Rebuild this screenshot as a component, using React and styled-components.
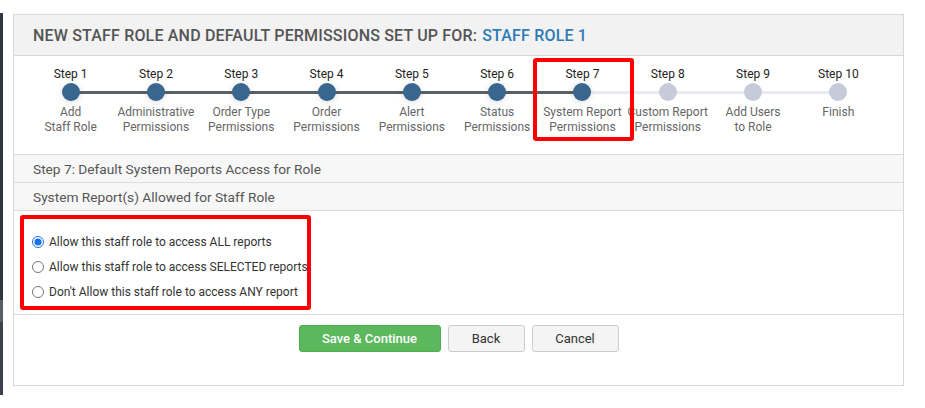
import React, { useState } from 'react';
import styled, { createGlobalStyle } from 'styled-components';

const GlobalStyle = createGlobalStyle`
  html, body {
    margin: 0;
    padding: 0;
    background: #ffffff;
    font-family: Roboto, "Liberation Sans", Arial, sans-serif;
  }
`;

const Page = styled.div`
  display: flex;
  align-items: flex-start;
  padding-top: 13px;
  width: 925px;
  height: 408px;
  box-sizing: border-box;
`;

const SideEdge = styled.div`
  width: 3px;
  height: 382px;
  background: linear-gradient(#2e3742, #2e3742 287px, #5a5f66 287px, #5a5f66 309px, #3a434d 309px);
  margin-right: 10px;
`;

const Panel = styled.div`
  margin-top: 1px;
  width: 891px;
  height: 372px;
  box-sizing: border-box;
  border: 1px solid #d6d9d9;
  display: flex;
  flex-direction: column;
`;

const Header = styled.div`
  height: 40px;
  background: #f2f2f2;
  border-bottom: 1px solid #d6d9d9;
  display: flex;
  align-items: center;
  padding-left: 19px;
  font-size: 16px;
  font-weight: 500;
  letter-spacing: 0.18px;
  color: #555;
  text-transform: uppercase;
`;

const Accent = styled.span`
  color: #2f7bb6;
  margin-left: 5px;
`;

const Stepper = styled.div`
  display: flex;
  padding: 11px 21px 0 14px;
  height: 99px;
  box-sizing: border-box;
  border-bottom: 1px solid #dcdcdc;
`;

const Step = styled.div`
  position: relative;
  width: 85.3px;
  flex: 0 0 85.3px;
  display: flex;
  flex-direction: column;
  align-items: center;
  font-size: 12px;

  &::before, &::after {
    content: '';
    position: absolute;
    top: 23.5px;
    height: 3px;
    width: 50%;
  }
  &::before {
    left: 0;
    background: ${p => (p.$first ? 'transparent' : p.$done ? '#5b6068' : '#eaeaf0')};
  }
  &::after {
    right: 0;
    background: ${p => (p.$last ? 'transparent' : p.$doneRight ? '#5b6068' : '#eaeaf0')};
  }
`;

const StepNum = styled.div`
  line-height: 15px;
  color: #222;
  white-space: nowrap;
`;

const Dot = styled.div`
  position: relative;
  z-index: 1;
  margin-top: 1px;
  width: 18px;
  height: 18px;
  border-radius: 50%;
  background: ${p => (p.$done ? '#38668f' : '#c6cbd9')};
  box-shadow: ${p => (p.$done ? '0 1px 6px rgba(0,0,0,0.15)' : 'none')};
`;

const StepLabel = styled.div`
  margin-top: 4px;
  line-height: 15px;
  color: #666;
  text-align: center;
  white-space: nowrap;
`;

const Highlight = styled.div`
  position: absolute;
  left: -7px;
  top: -9px;
  width: 101px;
  height: 83px;
  box-sizing: border-box;
  border: 4px solid #ff0000;
  border-radius: 3px;
  z-index: 2;
  pointer-events: none;
`;

const SubRow = styled.div`
  height: 27px;
  background: #f7f7f7;
  border-bottom: 1px solid #dcdcdc;
  display: flex;
  align-items: center;
  padding-left: 19px;
  font-size: 13.7px;
  color: #555;
`;

const Options = styled.div`
  border-bottom: 1px solid #dcdcdc;
  padding: 4px 0 4px 6px;
`;

const RedBox = styled.div`
  width: 291px;
  box-sizing: border-box;
  border: 4px solid #ff0000;
  border-radius: 3px;
  padding: 10px 0 2px 8px;
`;

const Option = styled.label`
  display: flex;
  align-items: center;
  height: 25px;
  font-size: 12px;
  color: #333;
  white-space: nowrap;
  cursor: pointer;
`;

const Radio = styled.input`
  width: 12px;
  height: 12px;
  margin: 0 5px 0 0;
  accent-color: #1a73e8;
`;

const Actions = styled.div`
  display: flex;
  justify-content: center;
  gap: 7px;
  padding-top: 10px;
`;

const Button = styled.button`
  height: 27px;
  box-sizing: border-box;
  padding: 0;
  width: ${p => p.$w}px;
  border-radius: 3px;
  font-family: Roboto, "Liberation Sans", Arial, sans-serif;
  font-size: 13px;
  cursor: pointer;
  border: 1px solid ${p => (p.$primary ? '#4cae4c' : '#cccccc')};
  background: ${p => (p.$primary ? '#5cb85c' : '#f4f4f4')};
  color: ${p => (p.$primary ? '#ffffff' : '#333333')};
  font-weight: ${p => (p.$primary ? 500 : 400)};
`;

const steps = [
  ['Add', 'Staff Role'],
  ['Administrative', 'Permissions'],
  ['Order Type', 'Permissions'],
  ['Order', 'Permissions'],
  ['Alert', 'Permissions'],
  ['Status', 'Permissions'],
  ['System Report', 'Permissions'],
  ['Custom Report', 'Permissions'],
  ['Add Users', 'to Role'],
  ['Finish'],
];

const current = 7;

const choices = [
  'Allow this staff role to access ALL reports',
  'Allow this staff role to access SELECTED reports',
  "Don't Allow this staff role to access ANY report",
];

export default function App() {
  const [choice, setChoice] = useState(0);

  return (
    <>
      <GlobalStyle />
      <Page>
        <SideEdge />
        <Panel>
          <Header>
            New Staff Role and Default Permissions Set Up For:
            <Accent>Staff Role 1</Accent>
          </Header>

          <Stepper>
            {steps.map((label, i) => {
              const n = i + 1;
              return (
                <Step
                  key={n}
                  $first={n === 1}
                  $last={n === steps.length}
                  $done={n <= current}
                  $doneRight={n < current}
                >
                  {n === current && <Highlight />}
                  <StepNum>Step {n}</StepNum>
                  <Dot $done={n <= current} />
                  <StepLabel>
                    {label.map((l, j) => (
                      <div key={j}>{l}</div>
                    ))}
                  </StepLabel>
                </Step>
              );
            })}
          </Stepper>

          <SubRow>Step 7: Default System Reports Access for Role</SubRow>
          <SubRow>System Report(s) Allowed for Staff Role</SubRow>

          <Options>
            <RedBox>
              {choices.map((c, i) => (
                <Option key={i}>
                  <Radio
                    type="radio"
                    name="reports"
                    checked={choice === i}
                    onChange={() => setChoice(i)}
                  />
                  {c}
                </Option>
              ))}
            </RedBox>
          </Options>

          <Actions>
            <Button $primary $w={142}>Save &amp; Continue</Button>
            <Button $w={77}>Back</Button>
            <Button $w={87}>Cancel</Button>
          </Actions>
        </Panel>
      </Page>
    </>
  );
}
